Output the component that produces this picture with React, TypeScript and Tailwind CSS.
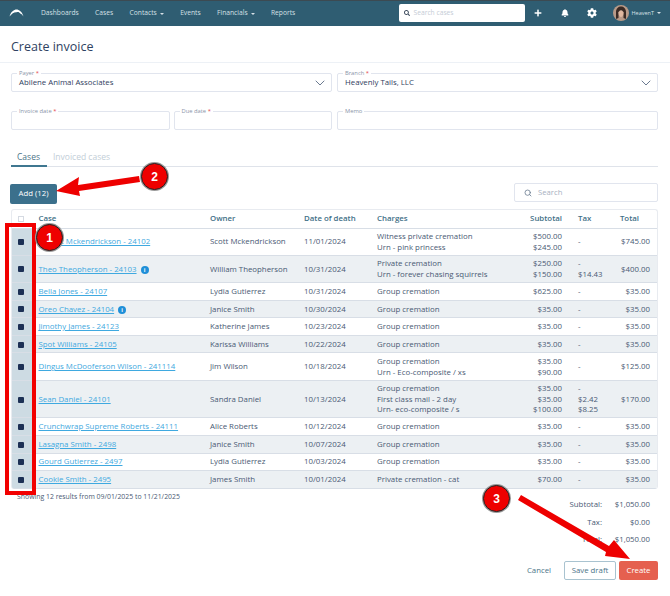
import React from "react";
import { Search, ChevronDown } from "lucide-react";
import { FaSearch, FaPlus, FaBell, FaCog } from "react-icons/fa";

type Row = { name: string; info?: boolean; owner: string; date: string; charges: string[]; sub: string[]; tax: string[]; total: string; h: string };

const rows: Row[] = [
  { name: "Fat Cat Mckendrickson - 24102", owner: "Scott Mckendrickson", date: "11/01/2024", charges: ["Witness private cremation", "Urn - pink princess"], sub: ["$500.00", "$245.00"], tax: ["-"], total: "$745.00", h: "h-[27.3px]" },
  { name: "Theo Theopherson - 24103", info: true, owner: "William Theopherson", date: "10/31/2024", charges: ["Private cremation", "Urn - forever chasing squirrels"], sub: ["$250.00", "$150.00"], tax: ["-", "$14.43"], total: "$400.00", h: "h-[27.3px]" },
  { name: "Bella Jones - 24107", owner: "Lydia Gutierrez", date: "10/31/2024", charges: ["Group cremation"], sub: ["$625.00"], tax: ["-"], total: "$35.00", h: "h-[17.6px]" },
  { name: "Oreo Chavez - 24104", info: true, owner: "Janice Smith", date: "10/30/2024", charges: ["Group cremation"], sub: ["$35.00"], tax: ["-"], total: "$35.00", h: "h-[17.6px]" },
  { name: "Jimothy James - 24123", owner: "Katherine James", date: "10/23/2024", charges: ["Group cremation"], sub: ["$35.00"], tax: ["-"], total: "$35.00", h: "h-[17.6px]" },
  { name: "Spot Williams - 24105", owner: "Karissa Williams", date: "10/22/2024", charges: ["Group cremation"], sub: ["$35.00"], tax: ["-"], total: "$35.00", h: "h-[17.6px]" },
  { name: "Dingus McDooferson Wilson - 241114", owner: "Jim Wilson", date: "10/18/2024", charges: ["Group cremation", "Urn - Eco-composite / xs"], sub: ["$35.00", "$90.00"], tax: ["-"], total: "$125.00", h: "h-[27.3px]" },
  { name: "Sean Daniel - 24101", owner: "Sandra Daniel", date: "10/13/2024", charges: ["Group cremation", "First class mail - 2 day", "Urn- eco-composite / s"], sub: ["$35.00", "$35.00", "$100.00"], tax: ["-", "$2.42", "$8.25"], total: "$170.00", h: "h-[37.6px]" },
  { name: "Crunchwrap Supreme Roberts - 24111", owner: "Alice Roberts", date: "10/12/2024", charges: ["Group cremation"], sub: ["$35.00"], tax: ["-"], total: "$35.00", h: "h-[17.6px]" },
  { name: "Lasagna Smith - 2498", owner: "Janice Smith", date: "10/07/2024", charges: ["Group cremation"], sub: ["$35.00"], tax: ["-"], total: "$35.00", h: "h-[17.6px]" },
  { name: "Gourd Gutierrez - 2497", owner: "Lydia Gutierrez", date: "10/03/2024", charges: ["Group cremation"], sub: ["$35.00"], tax: ["-"], total: "$35.00", h: "h-[17.6px]" },
  { name: "Cookie Smith - 2495", owner: "James Smith", date: "10/01/2024", charges: ["Private cremation - cat"], sub: ["$70.00"], tax: ["-"], total: "$35.00", h: "h-[17.6px]" },
];

function Field({ label, required, value, chevron }: { label: string; required?: boolean; value?: string; chevron?: boolean }) {
  return (
    <div className="relative flex h-[19px] min-w-0 flex-1 items-center rounded-[2px] border border-[#e1e5ee] bg-white px-[7px]">
      <span className="absolute left-[5px] top-[-5px] bg-white px-[2px] text-[5.8px] leading-[8px] text-[#8a94a8]">
        {label}
        {required && <span className="text-[#e5484d]"> *</span>}
      </span>
      {value && <span className="mt-[1px] text-[7.8px] leading-none text-[#2f4060]">{value}</span>}
      {chevron && <ChevronDown className="ml-auto mr-[-4px] text-[#6b7a90]" size={16} strokeWidth={1.5} />}
    </div>
  );
}

function Badge({ n, className }: { n: string; className: string }) {
  return (
    <div className={"absolute flex h-[27px] w-[27px] items-center justify-center rounded-full border-[1.5px] border-[#222] bg-[#ee0000] font-['Liberation_Sans',sans-serif] text-[12px] font-bold text-white shadow-[0_0_0_1px_#9a9a9a] " + className}>
      {n}
    </div>
  );
}

function Caret() {
  return <i className="mt-[1px] border-x-[2px] border-t-[2px] border-x-transparent border-t-[#d5e0e6]" />;
}

export default function App() {
  return (
    <div className="relative h-[596px] w-[670px] overflow-hidden bg-white font-['Open_Sans',sans-serif] text-[#3b4a63]">
      <header className="flex h-[25.5px] items-center border-t border-[#3c4a52] bg-[#2f5d72] text-[6.7px] text-[#d5e0e6]">
        <svg width="15" height="8" viewBox="0 0 15 8" className="ml-[9px]">
          <path d="M0.5 7.5C2 2.5 5 0.5 7.5 0.5s5.5 2 7 7c-1-1.6-2-2.4-3.2-3C10.5 3 9 2.600 7.500 3.200 5 3 3 4.500 0.500 7.500z" fill="#fff" />
        </svg>
        <nav className="ml-[17px] flex items-center gap-[16.4px]">
          <span>Dashboards</span>
          <span>Cases</span>
          <span className="flex items-center gap-[3px]">Contacts<Caret /></span>
          <span>Events</span>
          <span className="flex items-center gap-[3px]">Financials<Caret /></span>
          <span>Reports</span>
        </nav>
        <div className="ml-auto flex h-[18px] w-[126px] items-center gap-[4px] rounded-[2px] bg-white px-[5px] text-[#c5ccd6]">
          <FaSearch size={6} className="text-[#3c4a5c]" />
          <span className="text-[6.700px]">Search cases</span>
        </div>
        <FaPlus size={8} className="ml-[9px] text-white" />
        <FaBell size={8} className="ml-[19px] text-white" />
        <FaCog size={10} className="ml-[18px] text-white" />
        <svg width="16" height="16" viewBox="0 0 16 16" className="ml-[16px]">
          <circle cx="8" cy="8" r="8" fill="#b89a88" />
          <path d="M3 14V7c0-3.500 2.500-5.500 5-5.500S13 3.500 13 7v7l-2.500-1V7.500C10 6 9 5 8 5s-2 1-2.500 2.500V13z" fill="#3a2a24" />
          <path d="M5.500 7.500C6 5.500 10 5.500 10.500 7.500c0 3-1.500 4.500-2.500 4.500S5.500 10.500 5.500 7.500z" fill="#e0b8a0" />
        </svg>
        <span className="ml-[3px] text-[5.500px]">HeavenT</span>
        <i className="ml-[3px] mr-[9px] border-x-[2px] border-t-[2px] border-x-transparent border-t-[#d5e0e6]" />
      </header>

      <div className="flex h-[37.5px] items-center border-b border-[#edf1f6] pl-[11px]">
        <h1 className="mt-[6px] text-[12.5px] leading-none text-[#2f4262]">Create invoice</h1>
      </div>

      <main className="pl-[11px] pr-[12px] pt-[10px]">
        <div className="flex gap-[5px]">
          <Field label="Payer" required value="Abilene Animal Associates" chevron />
          <Field label="Branch" required value="Heavenly Tails, LLC" chevron />
        </div>
        <div className="mt-[19px] flex gap-[5px]">
          <div className="flex flex-1 gap-[4px]">
            <Field label="Invoice date" required />
            <Field label="Due date" required />
          </div>
          <div className="flex flex-1">
            <Field label="Memo" />
          </div>
        </div>

        <div className="mt-[19px] flex h-[18px] items-center border-b border-[#dfe3ea] text-[8.5px]">
          <span className="-mb-[1px] flex h-[18px] w-[36px] items-center border-b-[2px] border-[#3f7790] pl-[6px] text-[#4b7488]">Cases</span>
          <span className="ml-[6px] text-[#c2ced7]">Invoiced cases</span>
        </div>

        <div className="mt-[17px] flex items-start justify-between">
          <button className="ml-[-1px] h-[20px] w-[47px] rounded-[2px] bg-[#3b708c] text-[7.800px] text-white">Add (12)</button>
          <div className="mt-[-1px] flex h-[19px] w-[144px] items-center gap-[6px] rounded-[2px] border border-[#e1e5ee] px-[9px] text-[7.700px] text-[#a7b0bf]">
            <Search size={8} strokeWidth={2.500} className="text-[#6f7f94]" />
            Search
          </div>
        </div>

        <div className="mt-[5px] overflow-hidden rounded-[3px] border border-b-0 border-[#e8ebf0]">
          <table className="w-full table-fixed border-collapse text-[7.850px] leading-[10.800px] text-[#4a5a74]">
            <colgroup>
              <col className="w-[20.500px]" />
              <col className="w-[172.500px]" />
              <col className="w-[94px]" />
              <col className="w-[73px]" />
              <col className="w-[133px]" />
              <col className="w-[57px]" />
              <col className="w-[43px]" />
              <col />
            </colgroup>
            <thead>
              <tr className="h-[18px] text-left text-[#3f7087]">
                <th className="pr-[2px] text-center font-normal">
                  <span className="inline-block h-[6px] w-[6px] border border-[#d5dae2] align-middle" />
                </th>
                <th className="pl-[6px] font-semibold">Case</th>
                <th className="pl-[5px] font-semibold">Owner</th>
                <th className="pl-[5px] font-semibold">Date of death</th>
                <th className="pl-[5px] font-semibold">Charges</th>
                <th className="text-right font-semibold">Subtotal</th>
                <th className="pl-[16px] font-semibold">Tax</th>
                <th className="pr-[18px] text-right font-semibold">Total</th>
              </tr>
            </thead>
            <tbody>
              {rows.map((r, i) => (
                <tr key={r.name} className={r.h + " border-t border-[#d8dee6] " + (i % 2 ? "bg-[#ecf0f3]" : "bg-white") + (i === rows.length - 1 ? " border-b" : "")}>
                  <td className="bg-[#cddbe3] pr-[2px] text-center">
                    <span className="inline-block h-[6px] w-[6px] rounded-[1px] bg-[#1c3055] align-middle" />
                  </td>
                  <td className="whitespace-nowrap pl-[6px]">
                    <span className="text-[#3fa9e0] underline">{r.name}</span>
                    {r.info && (
                      <span className="ml-[4px] inline-flex h-[8px] w-[8px] items-center justify-center rounded-full bg-[#1f8fd8] text-[5.500px] font-bold leading-none text-white">i</span>
                    )}
                  </td>
                  <td className="whitespace-nowrap pl-[5px]">{r.owner}</td>
                  <td className="pl-[5px]">{r.date}</td>
                  <td className="whitespace-nowrap pl-[5px]">
                    {r.charges.map((c) => <div key={c}>{c}</div>)}
                  </td>
                  <td className="text-right">
                    {r.sub.map((c, k) => <div key={k}>{c}</div>)}
                  </td>
                  <td className="pl-[16px]">
                    {r.tax.map((c, k) => <div key={k}>{c}</div>)}
                  </td>
                  <td className="pr-[7px] text-right">{r.total}</td>
                </tr>
              ))}
            </tbody>
          </table>
        </div>

        <p className="ml-[6px] mt-[3.500px] text-[6.900px] leading-[10px] text-[#4a5a74]">Showing 12 results from 09/01/2025 to 11/21/2025</p>

        <dl className="ml-auto mt-[-3px] w-[120px] text-[7.800px] leading-[11px] text-[#4a5a74]">
          {[["Subtotal:", "$1,050.00"], ["Tax:", "$0.00"], ["Total:", "$1,050.00"]].map(([a, b]) => (
            <div key={a} className="mb-[6.500px] flex pr-[8px]">
              <dt className="w-[64px] text-right">{a}</dt>
              <dd className="flex-1 text-right">{b}</dd>
            </div>
          ))}
        </dl>

        <div className="mt-[16px] flex items-center justify-end text-[7.800px]">
          <span className="mr-[13px] text-[#4b7488]">Cancel</span>
          <button className="h-[19px] w-[52px] rounded-[2px] border border-[#a9c3d0] bg-white text-[#4b7488]">Save draft</button>
          <button className="ml-[3px] h-[19px] w-[39px] rounded-[2px] bg-[#e5604f] text-white">Create</button>
        </div>
      </main>

      <div className="absolute left-[5px] top-[223px] h-[272px] w-[31px] border-[4px] border-[#f20000]" />
      <svg className="pointer-events-none absolute left-0 top-0" width="670" height="596">
        <path d="M139 176L78 185L79 177L56 191L80 196L79 191L140 182z" fill="#ee0000" />
        <path d="M518 500L521 495L609 546L614 540L630 559L605 556L606 552z" fill="#ee0000" />
      </svg>
      <Badge n="1" className="left-[36px] top-[224px]" />
      <Badge n="2" className="left-[141px] top-[163px]" />
      <Badge n="3" className="left-[483px] top-[485px]" />
    </div>
  );
}
